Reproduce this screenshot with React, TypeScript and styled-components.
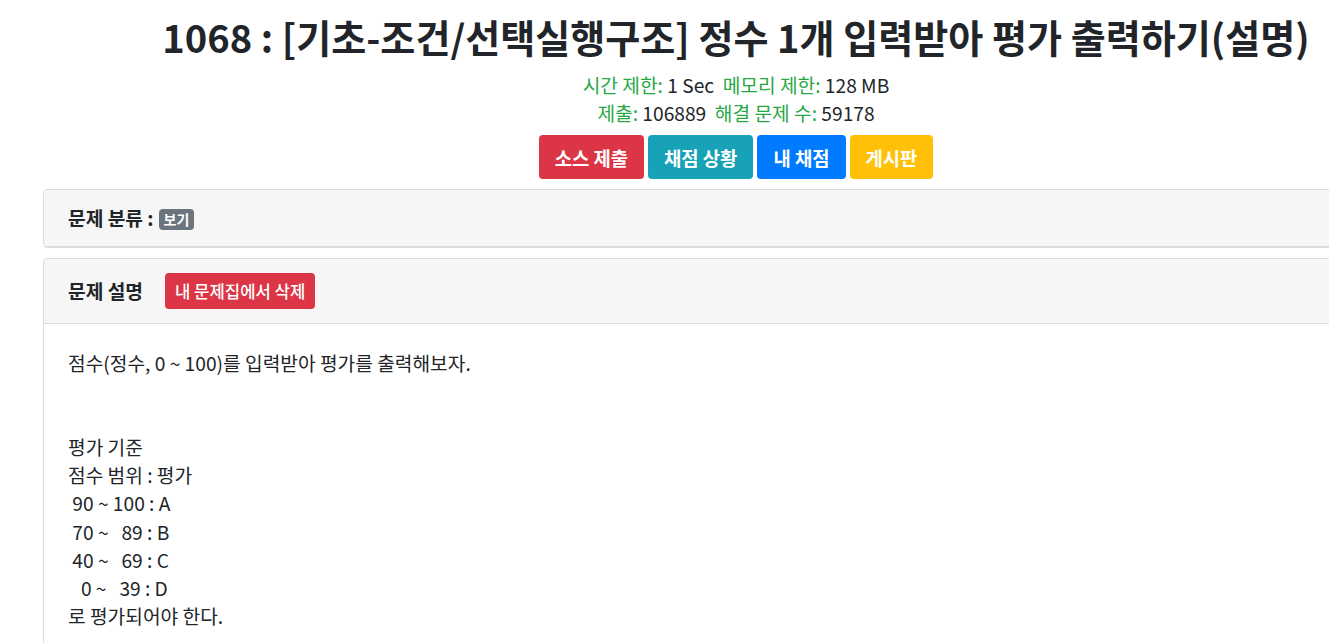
import React from "react";
import styled, { createGlobalStyle } from "styled-components";

const Global = createGlobalStyle`
  html, body { margin: 0; padding: 0; background: #fff; overflow: hidden; }
  body {
    font-family: "Noto Sans CJK KR", "Noto Sans", sans-serif;
    color: #212529;
  }
`;

const Page = styled.div`
  width: 1386px;
  margin-left: 43px;
  padding-top: 13px;
`;

const Header = styled.div`
  display: flex;
  flex-direction: column;
  align-items: center;
`;

const Title = styled.h1`
  margin: 0 0 10px;
  font-size: 38.1px;
  font-weight: 700;
  line-height: 48px;
  color: #212529;
  white-space: nowrap;
`;

const Info = styled.div`
  font-size: 19.2px;
  line-height: 28px;
  color: #212529;
`;

const Label = styled.span`
  color: #28a745;
`;

const ButtonRow = styled.div`
  display: flex;
  gap: 4px;
  margin-top: 8px;
`;

const Btn = styled.button<{ $bg: string }>`
  background: ${(p) => p.$bg};
  color: #fff;
  border: none;
  border-radius: 4px;
  height: 44px;
  padding: 0 16px;
  font-family: inherit;
  font-size: 18.8px;
  font-weight: 700;
  cursor: pointer;
`;

const Card = styled.div`
  border: 1px solid #dcdcdc;
  border-radius: 4px;
  margin-top: 10px;
  background: #fff;
`;

const CardHeader = styled.div<{ $tall?: boolean }>`
  background: #f6f6f6;
  display: flex;
  align-items: center;
  gap: 22px;
  padding: 0 24px;
  height: ${(p) => (p.$tall ? "64px" : "56px")};
  border-bottom: 1px solid #dcdcdc;
  border-radius: 4px 4px 0 0;
  font-size: 19.2px;
  font-weight: 700;
`;

const Badge = styled.span`
  display: inline-block;
  background: #6c757d;
  color: #fff;
  font-size: 14px;
  font-weight: 700;
  line-height: 21px;
  height: 21px;
  padding: 0 5px;
  border-radius: 4px;
  margin-left: 5px;
  vertical-align: 1px;
`;

const SmallBtn = styled.button`
  background: #dc3545;
  color: #fff;
  border: none;
  border-radius: 4px;
  height: 36px;
  padding: 0 10px;
  font-family: inherit;
  font-size: 16.7px;
  font-weight: 500;
`;

const CardBody = styled.div`
  padding: 25px 24px;
  font-size: 19.2px;
  line-height: 28.1px;
`;

const Line = styled.div`
  white-space: pre;
  min-height: 28.1px;
`;

const lines = [
  "점수(정수, 0 ~ 100)를 입력받아 평가를 출력해보자.",
  "",
  "",
  "평가 기준",
  "점수 범위 : 평가",
  " 90 ~ 100 : A",
  " 70 ~   89 : B",
  " 40 ~   69 : C",
  "   0 ~   39 : D",
  "로 평가되어야 한다.",
];

export default function App() {
  return (
    <>
      <Global />
      <Page>
        <Header>
          <Title>1068 : [기초-조건/선택실행구조] 정수 1개 입력받아 평가 출력하기(설명)</Title>
          <Info>
            <Label>시간 제한:</Label> 1 Sec&nbsp;&nbsp;<Label>메모리 제한:</Label> 128 MB
          </Info>
          <Info>
            <Label>제출:</Label> 106889&nbsp;&nbsp;<Label>해결 문제 수:</Label> 59178
          </Info>
          <ButtonRow>
            <Btn $bg="#dc3545">소스 제출</Btn>
            <Btn $bg="#17a2b8">채점 상황</Btn>
            <Btn $bg="#007bff">내 채점</Btn>
            <Btn $bg="#ffc107">게시판</Btn>
          </ButtonRow>
        </Header>
        <Card>
          <CardHeader>
            <span>
              문제 분류 :<Badge>보기</Badge>
            </span>
          </CardHeader>
        </Card>
        <Card>
          <CardHeader $tall>
            <span>문제 설명</span>
            <SmallBtn>내 문제집에서 삭제</SmallBtn>
          </CardHeader>
          <CardBody>
            {lines.map((l, i) => (
              <Line key={i}>{l}</Line>
            ))}
          </CardBody>
        </Card>
      </Page>
    </>
  );
}
